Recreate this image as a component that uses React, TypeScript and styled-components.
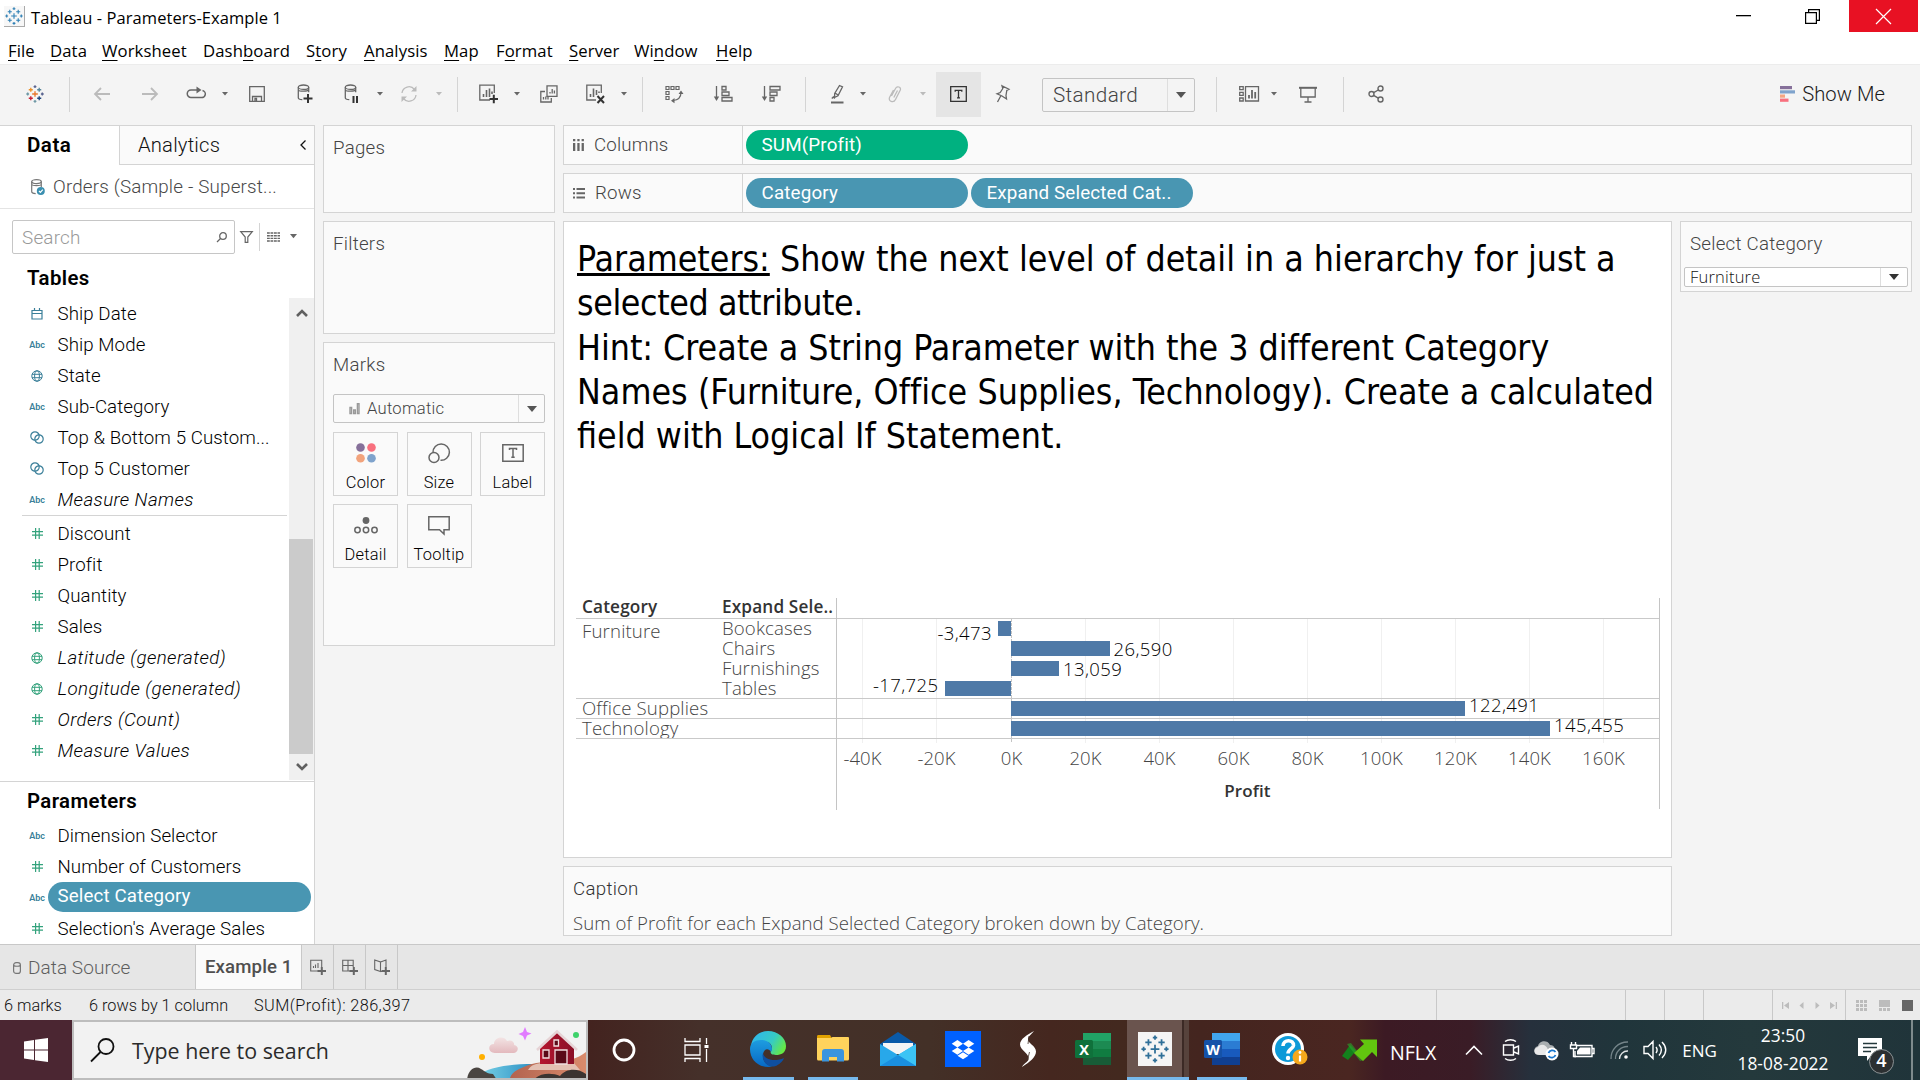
import React from 'react';
import styled, { createGlobalStyle, css } from 'styled-components';

const UI = 'Roboto, "Liberation Sans", sans-serif';
const SEGOE = '"Open Sans", "Noto Sans", sans-serif';
const TAHOMA = '"DejaVu Sans Condensed", "DejaVu Sans", sans-serif';
const LINE = '#d4d4d4';
const BLUE = '#4e79a7';
const PILL = '#4996b2';
const GREEN = '#00b180';

const Global = createGlobalStyle`
  *, *::before, *::after { box-sizing: border-box; }
  html, body { margin: 0; padding: 0; background: #f4f4f4; overflow: hidden; }
  svg { display: block; flex: none; overflow: visible; }
`;

const Screen = styled.div`
  width: 1920px;
  height: 1080px;
  display: flex;
  flex-direction: column;
  background: #f4f4f4;
  font-family: ${UI};
  font-size: 18.7px;
  font-weight: 350;
  letter-spacing: 0.06px;
  color: #111;
  white-space: nowrap;
  overflow: hidden;
`;

/* ---------- window chrome ---------- */

const TitleBar = styled.header`
  height: 32px;
  display: flex;
  align-items: center;
  background: #fff;
  padding: 0 2px 0 4px;
  font-family: ${SEGOE};
  font-weight: 400;
  font-size: 16.5px;
  color: #000;
`;
const AppIcon = styled.div`
  width: 21px;
  height: 21px;
  display: grid;
  place-items: center;
  background: #f7f7f7;
  border-right: 1px solid #aaa;
  border-bottom: 1px solid #aaa;
  margin-right: 6px;
`;
const WindowTitle = styled.span`
  flex: 1;
  padding-top: 2px;
`;
const WinButton = styled.div<{ $close?: boolean }>`
  width: 69px;
  height: 32px;
  display: grid;
  place-items: center;
  padding-right: ${p => (p.$close ? 0 : 4)}px;
  background: ${p => (p.$close ? '#e81123' : 'transparent')};
`;
const MenuBar = styled.nav`
  height: 32px;
  display: flex;
  align-items: center;
  background: #fff;
  padding: 4px 0 0 8px;
  font-family: ${SEGOE};
  font-weight: 400;
  font-size: 16.7px;
  letter-spacing: 0.1px;
  color: #000;
  u { text-underline-offset: 3px; text-decoration-thickness: 1px; }
`;
const MenuItem = styled.span<{ $w: number }>`
  width: ${p => p.$w}px;
`;

const ToolBar = styled.div`
  height: 61px;
  border-top: 1px solid #ececec;
  display: flex;
  align-items: center;
  padding-right: 35px;
  padding-bottom: 1px;
  color: #666;
`;
const Tool = styled.div<{ $ml: number; $w: number; $active?: boolean; $dim?: boolean }>`
  width: ${p => p.$w}px;
  height: 45px;
  padding-bottom: 1px;
  margin-left: ${p => p.$ml}px;
  flex: none;
  display: grid;
  place-items: center;
  background: ${p => (p.$active ? '#e5e5e5' : 'transparent')};
  color: ${p => (p.$dim ? '#bbb' : p.$active ? '#333' : '#666')};
`;
const ToolSep = styled.div<{ $ml: number }>`
  width: 1px;
  height: 35px;
  margin-left: ${p => p.$ml}px;
  background: ${LINE};
`;
const FitSelect = styled.div`
  width: 153px;
  height: 34px;
  margin: 1px 0 0 30px;
  display: flex;
  border: 1px solid #c4c4c4;
  border-radius: 2px;
  font-size: 20.7px;
  color: #444;
  align-items: center;
  padding-left: 10px;
  letter-spacing: 0.35px;
`;
const DropEnd = styled.div<{ $w: number }>`
  width: ${p => p.$w}px;
  align-self: stretch;
  margin-left: auto;
  border-left: 1px solid #dedede;
  display: grid;
  place-items: center;
`;
const ShowMe = styled.div`
  margin-left: auto;
  display: flex;
  align-items: center;
  gap: 7px;
  font-size: 20.2px;
  color: #1a1a1a;
  padding-bottom: 1px;
`;

/* ---------- workspace ---------- */

const Workspace = styled.main`
  height: 819px;
  display: flex;
  align-items: flex-start;
`;
const DataPane = styled.aside`
  width: 315px;
  height: 819px;
  background: #fff;
  border-right: 1px solid ${LINE};
  border-top: 1px solid ${LINE};
  display: flex;
  flex-direction: column;
`;
const PaneTabs = styled.div`
  height: 39px;
  display: flex;
  font-size: 20.2px;
`;
const DataTab = styled.div`
  width: 119px;
  padding-left: 27px;
  line-height: 38px;
  font-weight: 600;
  font-size: 20.6px;
  color: #000;
  letter-spacing: 0.45px;
`;
const AnalyticsTab = styled.div`
  flex: 1;
  display: flex;
  align-items: center;
  justify-content: space-between;
  padding: 0 8px 0 18px;
  background: #fafafa;
  border-left: 1px solid ${LINE};
  border-bottom: 1px solid ${LINE};
  letter-spacing: 0.2px;
`;
const SourceRow = styled.div`
  height: 44px;
  border-bottom: 1px solid #e4e4e4;
  display: flex;
  align-items: center;
  padding-left: 31px;
  gap: 8px;
  color: #484848;
  font-size: 18.8px;
  letter-spacing: 0.18px;
`;
const SearchRow = styled.div`
  display: flex;
  align-items: center;
  height: 45px;
  padding: 11px 0 0 12px;
  color: #666;
`;
const SearchBox = styled.div`
  width: 223px;
  height: 34px;
  border: 1px solid #c6c6c6;
  border-radius: 2px;
  display: flex;
  align-items: center;
  justify-content: space-between;
  padding: 0 7px 0 9px;
  color: #999;
  font-size: 18.9px;
  letter-spacing: 0.2px;
  margin-right: 5px;
  svg { color: #666; }
`;
const ThinSep = styled.div`
  width: 1px;
  height: 28px;
  background: ${LINE};
  margin: 0 7px 0 6px;
`;
const SectionTitle = styled.h2<{ $h: number; $drop?: number }>`
  margin: 0;
  height: ${p => p.$h}px;
  line-height: ${p => p.$h}px;
  padding: ${p => p.$drop ?? 0}px 0 0 27px;
  font-size: 20.4px;
  font-weight: 600;
  letter-spacing: 0.4px;
  color: #000;
`;
const ListArea = styled.div`
  height: 482px;
  display: flex;
`;
const FieldList = styled.div`
  width: 289px;
`;
const FieldRow = styled.div<{ $italic?: boolean }>`
  height: 31px;
  display: flex;
  align-items: center;
  color: #000;
  font-style: ${p => (p.$italic ? 'italic' : 'normal')};
  letter-spacing: ${p => (p.$italic ? 0.42 : 0.08)}px;
`;
const FieldIcon = styled.div<{ $measure?: boolean }>`
  width: 16px;
  flex: none;
  margin-left: 29px;
  display: grid;
  place-items: center;
  font-style: normal;
  color: ${p => (p.$measure ? '#33a27c' : '#3a7f99')};
`;
const Abc = styled.span`
  font-size: 9px;
  font-weight: 600;
  line-height: 12px;
  letter-spacing: -0.1px;
`;
const FieldName = styled.span<{ $selected?: boolean }>`
  margin-left: 3px;
  flex: 1;
  margin-right: 3px;
  height: 30px;
  line-height: 30px;
  padding-left: 9.5px;
  ${p => p.$selected && css`
    background: ${PILL};
    border-radius: 15px;
    color: #fff;
    font-weight: 400;
    letter-spacing: 0.15px;
    line-height: 29px;
    margin-bottom: 1px;
  `}
`;
const ListDivider = styled.div`
  height: 1px;
  background: ${LINE};
  margin: 0 2px 2px 22px;
`;
const ScrollBar = styled.div`
  width: 25px;
  background: #f0f0f0;
  display: flex;
  flex-direction: column;
  align-items: center;
  color: #606060;
`;
const ScrollArrow = styled.div<{ $h: number }>`
  height: ${p => p.$h}px;
  display: grid;
  place-items: center;
`;
const ScrollThumb = styled.div`
  width: 24px;
  height: 215px;
  margin-top: auto;
  align-self: flex-start;
  background: #cbcbcb;
`;
const ParamArea = styled.section`
  border-top: 1px solid ${LINE};
  margin-top: 1px;
  flex: 1;
`;

const CardColumn = styled.div`
  width: 232px;
  margin-left: 8px;
  display: flex;
  flex-direction: column;
  gap: 8px;
`;
const Card = styled.section<{ $h: number }>`
  height: ${p => p.$h}px;
  border: 1px solid ${LINE};
  background: #fafafa;
`;
const CardTitle = styled.div`
  height: 44px;
  line-height: 44px;
  padding-left: 9px;
  color: #444;
  letter-spacing: 0.25px;
`;
const MarkSelect = styled.div`
  width: 212px;
  height: 29px;
  margin: 7px 0 9px 9px;
  border: 1px solid #c4c4c4;
  border-radius: 2px;
  display: flex;
  align-items: center;
  padding-left: 15px;
  gap: 7px;
  color: #444;
  font-size: 16.6px;
  letter-spacing: 0.25px;
`;
const MarkGrid = styled.div`
  display: grid;
  grid-template-columns: repeat(3, 65px);
  grid-auto-rows: 64px;
  gap: 8px 8.5px;
  padding-left: 9px;
`;
const MarkButton = styled.div`
  border: 1px solid ${LINE};
  display: flex;
  flex-direction: column;
  align-items: center;
  font-size: 16.4px;
  letter-spacing: 0.25px;
  color: #000;
`;
const MarkGlyph = styled.div`
  height: 40px;
  display: grid;
  place-items: center;
  color: #666;
`;

const SheetArea = styled.div`
  width: 1349px;
  margin-left: 8px;
  display: flex;
  flex-direction: column;
  gap: 8px;
`;
const Shelf = styled.div`
  height: 40px;
  border: 1px solid ${LINE};
  background: #fafafa;
  display: flex;
  align-items: center;
  gap: 3px;
  color: #444;
`;
const ShelfName = styled.div`
  width: 179px;
  align-self: stretch;
  border-right: 1px solid ${LINE};
  display: flex;
  align-items: center;
  gap: 10px;
  padding-left: 9px;
  letter-spacing: 0.15px;
`;
const Pill = styled.div<{ $color: string }>`
  width: 222px;
  height: 30px;
  line-height: 31px;
  border-radius: 15px;
  padding-left: 15.5px;
  color: #fff;
  background: ${p => p.$color};
  font-size: 18.8px;
  font-weight: 400;
  letter-spacing: 0.16px;
`;
const SheetRow = styled.div`
  display: flex;
  gap: 8px;
  align-items: flex-start;
`;
const SheetColumn = styled.div`
  width: 1109px;
  display: flex;
  flex-direction: column;
  gap: 8px;
`;
const View = styled.section`
  height: 637px;
  background: #fff;
  border: 1px solid ${LINE};
  padding: 14.7px 12px 0;
  display: flex;
  flex-direction: column;
`;
const SheetTitle = styled.div`
  font-family: ${TAHOMA};
  font-weight: 400;
  font-size: 35.4px;
  line-height: 44px;
  height: 361px;
  padding-left: 1px;
  color: #000;
  u { text-decoration-thickness: 3px; text-underline-offset: 2px; }
`;
const Para = styled.p`
  margin: 0 0 1.5px;
`;
const TitleLine = styled.span<{ $ls: number }>`
  display: block;
  letter-spacing: ${p => p.$ls}px;
`;
const Viz = styled.div`
  height: 212px;
  display: flex;
  font-family: ${SEGOE};
`;
const RowHeads = styled.div`
  width: 261px;
  border-right: 1px solid #c4c4c4;
  font-size: 18.6px;
  font-weight: 300;
  color: #444;
`;
const HeadLine = styled.div<{ $h: number; $bold?: boolean }>`
  height: ${p => p.$h}px;
  border-bottom: 1px solid #c9c9c9;
  display: flex;
  overflow: hidden;
  line-height: 20px;
  ${p => p.$bold && css`
    font-weight: 600;
    font-size: 17.2px;
    color: #333;
  `}
`;
const Dim = styled.div<{ $first?: boolean; $top?: number }>`
  width: ${p => (p.$first ? 140 : 120)}px;
  padding-left: ${p => (p.$first ? 6 : 6)}px;
  margin-top: ${p => p.$top ?? -1}px;
  letter-spacing: 0.15px;
`;
const AxisText = styled.text<{ $dark?: boolean; $bold?: boolean }>`
  font-family: ${SEGOE};
  font-size: ${p => (p.$bold ? 17 : 18.5)}px;
  font-weight: ${p => (p.$bold ? 600 : 300)};
  letter-spacing: ${p => (p.$dark ? 0.4 : 0.1)}px;
  fill: ${p => (p.$bold ? '#333' : p.$dark ? '#000' : '#444')};
`;
const Caption = styled.section`
  height: 70px;
  border: 1px solid ${LINE};
  background: #fafafa;
  padding-left: 9px;
  overflow: hidden;
`;
const CaptionTitle = styled.div`
  height: 42px;
  line-height: 44px;
  color: #333;
  letter-spacing: 0.3px;
`;
const CaptionBody = styled.div`
  font-family: ${SEGOE};
  font-size: 18.6px;
  font-weight: 300;
  line-height: 28px;
  letter-spacing: 0.05px;
  color: #444;
`;
const ParamCard = styled.section`
  width: 232px;
  height: 71px;
  border: 1px solid ${LINE};
  background: #fafafa;
  color: #444;
`;
const ParamSelect = styled.div`
  width: 224px;
  height: 20px;
  margin: 1px 0 0 3px;
  display: flex;
  align-items: center;
  background: #fff;
  border: 1px solid #c4c4c4;
  border-radius: 2px;
  font-family: ${SEGOE};
  font-size: 16.5px;
  font-weight: 300;
  line-height: 20px;
  letter-spacing: 0.2px;
  color: #111;
  padding-left: 5px;
`;

/* ---------- sheet tabs and status ---------- */

const SheetTabs = styled.div`
  height: 45px;
  display: flex;
  background: #e6e6e6;
  border-top: 1px solid #c8c8c8;
`;
const SourceTab = styled.div`
  width: 196px;
  border-right: 1px solid #c8c8c8;
  display: flex;
  align-items: center;
  gap: 7px;
  padding: 1px 0 0 13px;
  color: #5e5e5e;
  font-size: 19px;
`;
const ActiveTab = styled.div`
  width: 106px;
  background: #fafafa;
  border-right: 1px solid #c8c8c8;
  line-height: 44px;
  padding-left: 9px;
  font-weight: 500;
  font-size: 18.6px;
  letter-spacing: 0.12px;
  color: #4f4f4f;
`;
const NewTab = styled.div`
  width: 32px;
  border-right: 1px solid #c8c8c8;
  display: grid;
  place-items: center;
  color: #666;
`;
const StatusBar = styled.div`
  height: 31px;
  display: flex;
  background: #ebebeb;
  border-top: 1px solid #cfcfcf;
  font-size: 16.3px;
  line-height: 31px;
  color: #111;
`;
const StatusText = styled.span<{ $w: number; $ls?: number }>`
  width: ${p => p.$w}px;
  letter-spacing: ${p => p.$ls ?? 0}px;
`;
const StatusCell = styled.div<{ $w: number; $pad?: number; $gap?: number; $auto?: boolean }>`
  width: ${p => p.$w}px;
  margin-left: ${p => (p.$auto ? 'auto' : 0)};
  border-left: 1px solid #c8c8c8;
  display: flex;
  align-items: center;
  gap: ${p => p.$gap ?? 0}px;
  padding-left: ${p => p.$pad ?? 0}px;
  color: #bcbcbc;
`;

/* ---------- taskbar ---------- */

const TaskBar = styled.footer`
  height: 60px;
  display: flex;
  font-family: ${SEGOE};
  font-weight: 400;
  letter-spacing: 0;
  color: #fff;
  background: linear-gradient(90deg, #4b2632 0, #4b2632 72px, #43231f 590px, #45302a 700px, #433027 930px, #45271f 1050px, #43291f 1120px, #44251f 1200px, #4a2621 1350px, #3c1a24 1385px, #3a1c26 1470px, #26303c 1530px, #20353b 1620px, #24393c 1750px, #20343a 1920px);
`;
const TaskCell = styled.div<{ $w: number; $shift?: number }>`
  width: ${p => p.$w}px;
  height: 60px;
  flex: none;
  display: grid;
  place-items: center;
  padding-left: ${p => p.$shift ?? 0}px;
`;
const TaskApp = styled(TaskCell)<{ $line?: number; $active?: boolean }>`
  grid-template-rows: 57px 3px;
  justify-items: center;
  ${p => p.$active && css`
    background: linear-gradient(90deg, transparent 5px, #6a544e 5px, #6a544e 60px, #3c2a25 60px, #3c2a25 62px, #57433c 62px);
  `}
  &::after {
    content: '';
    width: ${p => p.$line ?? 0}px;
    height: 3px;
    margin-left: ${p => (p.$active ? 5 : 0)}px;
    background: #76b9ed;
  }
`;
const ActiveGlyph = styled.div`
  padding-right: 1px;
`;
const TaskSearch = styled.div`
  width: 516px;
  height: 60px;
  background: #f2f2f2;
  border: 2px solid #bdbdbd;
  display: flex;
  align-items: center;
  padding-left: 16px;
  font-size: 21.4px;
  color: #2b2b2b;
  overflow: hidden;
`;
const SearchHint = styled.span`
  margin-left: 17px;
  padding-top: 1px;
  flex: 1;
`;
const Ticker = styled.div`
  width: 137px;
  display: flex;
  align-items: center;
  gap: 13px;
  padding: 0 0 0 21px;
  font-size: 19.6px;
`;
const TickerName = styled.span`
  padding-top: 4px;
`;
const Lang = styled(TaskCell)`
  font-size: 17px;
`;
const Clock = styled.div`
  width: 114px;
  display: flex;
  flex-direction: column;
  align-items: center;
  font-size: 17.3px;
  line-height: 28px;
  padding-top: 2px;
  letter-spacing: 0.1px;
`;
const Notice = styled.div`
  width: 73px;
  border-right: 2px solid #7f8a8d;
  padding: 18px 0 0 18px;
  position: relative;
`;
const Badge = styled.span`
  position: absolute;
  left: 29px;
  top: 29px;
  width: 25px;
  height: 25px;
  line-height: 21px;
  border-radius: 50%;
  border: 1.5px solid #8b9294;
  background: #2b2f31;
  text-align: center;
  font-size: 18px;
  font-weight: 600;
`;

/* ---------- icons ---------- */

type P = { children?: React.ReactNode; w?: number; h?: number; sw?: number; vb?: string };
const Ico = ({ children, w = 16, h = 18, sw = 1.3, vb }: P) => (
  <svg width={w} height={h} viewBox={vb ?? `0 0 ${w} ${h}`} fill="none" stroke="currentColor" strokeWidth={sw}>{children}</svg>
);
const Caret = ({ s = 6, c = 'currentColor' }: { s?: number; c?: string }) => (
  <svg width={s} height={s * 0.6} viewBox="0 0 10 6"><path d="M0 0h10L5 6z" fill={c} /></svg>
);
const CROSSES: [number, number, number, string][] = [
  [16, 16, 5, '#e8762b'], [8.5, 8.5, 3.6, '#eb912b'], [23.5, 8.5, 3.6, '#59879b'], [8.5, 23.5, 3.6, '#c72035'], [23.5, 23.5, 3.6, '#1f457d'],
  [16, 3, 2.5, '#5b6591'], [16, 29, 2.5, '#7099a6'], [3, 16, 2.5, '#7099a6'], [29, 16, 2.5, '#5b6591'],
];
const TableauMark = ({ size, mono, sw = 2 }: { size: number; mono?: string; sw?: number }) => (
  <svg width={size} height={size} viewBox="0 0 32 32" fill="none" strokeWidth={sw}>
    {CROSSES.map(([x, y, r, c], i) => <path key={i} stroke={mono ?? c} d={`M${x - r} ${y}h${2 * r}M${x} ${y - r}v${2 * r}`} />)}
  </svg>
);
const CalendarIcon = () => <Ico w={12} h={12} sw={1.2}><path d="M1 2.5h10v8.5H1zM1 5.5h10M3.5 0v3M8.500 0v3" /></Ico>;
const GlobeIcon = () => <Ico w={12} h={12} sw={1}><circle cx="6" cy="6" r="5.2" /><ellipse cx="6" cy="6" rx="2.4" ry="5.2" /><path d="M1 4.3h10M1 7.7h10" /></Ico>;
const SetIcon = () => <Ico w={14} h={13} sw={1.2}><circle cx="5" cy="5" r="4.2" /><circle cx="9" cy="8" r="4.2" /></Ico>;
const HashIcon = () => <Ico w={11} h={11} sw={1.2}><path d="M3.600 0v11M7.200 0v11M0 3.600h11M0 7.200h11" /></Ico>;

type Kind = 'date' | 'abc' | 'geo' | 'set' | 'num';
const KindIcon = ({ kind }: { kind: Kind }) => {
  if (kind === 'abc') return <Abc>Abc</Abc>;
  if (kind === 'date') return <CalendarIcon />;
  if (kind === 'geo') return <GlobeIcon />;
  if (kind === 'set') return <SetIcon />;
  return <HashIcon />;
};
type FieldDef = { kind: Kind; name: string; italic?: boolean; measure?: boolean; selected?: boolean };
const Field = ({ kind, name, italic, measure, selected }: FieldDef) => (
  <FieldRow $italic={italic}>
    <FieldIcon $measure={measure}><KindIcon kind={kind} /></FieldIcon>
    <FieldName $selected={selected}>{name}</FieldName>
  </FieldRow>
);

const DIMENSIONS: FieldDef[] = [
  { kind: 'date', name: 'Ship Date' },
  { kind: 'abc', name: 'Ship Mode' },
  { kind: 'geo', name: 'State' },
  { kind: 'abc', name: 'Sub-Category' },
  { kind: 'set', name: 'Top & Bottom 5 Custom...' },
  { kind: 'set', name: 'Top 5 Customer' },
  { kind: 'abc', name: 'Measure Names', italic: true },
];
const MEASURES: FieldDef[] = [
  { kind: 'num', name: 'Discount', measure: true },
  { kind: 'num', name: 'Profit', measure: true },
  { kind: 'num', name: 'Quantity', measure: true },
  { kind: 'num', name: 'Sales', measure: true },
  { kind: 'geo', name: 'Latitude (generated)', measure: true, italic: true },
  { kind: 'geo', name: 'Longitude (generated)', measure: true, italic: true },
  { kind: 'num', name: 'Orders (Count)', measure: true, italic: true },
  { kind: 'num', name: 'Measure Values', measure: true, italic: true },
];
const PARAMETERS: FieldDef[] = [
  { kind: 'abc', name: 'Dimension Selector' },
  { kind: 'num', name: 'Number of Customers', measure: true },
  { kind: 'abc', name: 'Select Category', selected: true },
  { kind: 'num', name: "Selection's Average Sales", measure: true },
];

/* ---------- chart ---------- */

const ZERO = 174.5;
const PER_K = 3.706;
const BARS = [
  { value: -3.473, label: '-3,473', x: 155, y: 42 },
  { value: 26.59, label: '26,590', x: 276.5, y: 58 },
  { value: 13.059, label: '13,059', x: 226, y: 78 },
  { value: -17.725, label: '-17,725', x: 101.5, y: 94 },
  { value: 122.491, label: '122,491', x: 632, y: 114 },
  { value: 145.455, label: '145,455', x: 717, y: 134 },
];
const TICKS = [-40, -20, 0, 20, 40, 60, 80, 100, 120, 140, 160];

const Plot = () => (
  <svg width={823} height={212} viewBox="0 0 823 212" shapeRendering="crispEdges">
    {TICKS.map(t => {
      const x = Math.round(ZERO + t * PER_K) - 0.5;
      return (
        <g key={t}>
          <path d={`M${x} 21V145`} stroke={t ? '#f0f0f0' : '#c4c4c4'} strokeDasharray={t ? undefined : '3 1'} />
          <AxisText x={x} y={167} textAnchor="middle">{`${t}K`}</AxisText>
        </g>
      );
    })}
    {[20.5, 100.5, 120.5, 140.5].map(y => <path key={y} d={`M0 ${y}H823`} stroke="#c9c9c9" />)}
    {BARS.map((b, i) => (
      <rect key={b.label} x={Math.min(ZERO, ZERO + b.value * PER_K) - 0.5} y={23 + i * 20} width={Math.abs(b.value) * PER_K} height={15} fill={BLUE} />
    ))}
    {BARS.map(b => <AxisText key={b.label} $dark x={b.x} y={b.y} textAnchor={b.value < 0 ? 'end' : 'start'}>{b.label}</AxisText>)}
    <AxisText $bold x={410.5} y={198.5} textAnchor="middle">Profit</AxisText>
    <path d="M822.5 0V211" stroke="#c4c4c4" />
  </svg>
);

/* ---------- toolbar glyphs ---------- */

const DbShape = () => <><ellipse cx="6.5" cy="3.2" rx="5.2" ry="2.2" /><path d="M1.3 3.2v10.5c0 1 1.5 1.8 4 2M11.7 3.2v5M1.3 6c1 1.6 9 1.6 10.4 0" /></>;

const TopTools = () => (
  <ToolBar>
    <Tool $ml={26} $w={18}><TableauMark size={18} sw={2.4} /></Tool>
    <ToolSep $ml={25} />
    <Tool $ml={24} $w={16} $dim><Ico sw={1.8} h={14}><path d="M16 7H1M7 1L1 7l6 6" /></Ico></Tool>
    <Tool $ml={32} $w={16} $dim><Ico sw={1.8} h={14}><path d="M0 7h15M9 1l6 6-6 6" /></Ico></Tool>
    <Tool $ml={29} $w={18}><Ico w={18} h={18} sw={1.5}><path d="M10 5H4a3.300 3.300 0 000 7.500h10a3.300 3.300 0 001.500-7" /><path d="M9.500 1.500l5 3.500-5 3.500z" fill="currentColor" stroke="none" /></Ico></Tool>
    <Tool $ml={17} $w={6}><Caret /></Tool>
    <Tool $ml={21} $w={16}><Ico h={16}><path d="M.7.7h14.600v14.600H.7zM3.500 15v-4.500h9V15M6 15v-2.500h1.500V15" /></Ico></Tool>
    <Tool $ml={32} $w={16}><Ico h={20}><DbShape /><path d="M6.500 14.500h9M11 10v9" stroke="#333" strokeWidth="2" /></Ico></Tool>
    <Tool $ml={31} $w={16}><Ico h={20}><DbShape /><path d="M9.500 12v7M13 12v7" stroke="#333" strokeWidth="2" /></Ico></Tool>
    <Tool $ml={17} $w={6}><Caret /></Tool>
    <Tool $ml={17} $w={18} $dim><Ico w={18} h={18}><path d="M2 8a7 7 0 0112.500-3.500M16 10a7 7 0 01-12.500 3.500" /><path d="M16.500 1v5.500H11zM1.500 17v-5.500H7z" fill="currentColor" stroke="none" /></Ico></Tool>
    <Tool $ml={18} $w={6} $dim><Caret /></Tool>
    <ToolSep $ml={15} />
    <Tool $ml={21} $w={20}><Ico w={20} h={20}><path d="M11 16H.8V1.200h14.500V9" /><path d="M4.500 13v-3M7.500 13V6M10.500 13V4.500M13 10V7.500" strokeWidth="1.600" /><path d="M10.500 15h8.500M14.800 10.800v8.500" stroke="#333" strokeWidth="2" /></Ico></Tool>
    <Tool $ml={15} $w={6}><Caret /></Tool>
    <Tool $ml={20} $w={18}><Ico w={18} h={18}><path d="M7 .8h10v10.500H7zM5 6.500H.8v10.500h10.500v-4M10 8.500V7M12.200 8.500V4M14.400 8.500V5.500M3.500 14.500V12M5.800 14.500V11.500M8 14.500V12" /></Ico></Tool>
    <Tool $ml={28} $w={20}><Ico w={20} h={20}><path d="M10 16H.8V1.200h14.500V9" /><path d="M4.500 13v-3M7.500 13V4.500M10.500 11V6M13 9V7.500" strokeWidth="1.600" /><path d="M11.500 12l6.500 7M18 12l-6.500 7" stroke="#333" strokeWidth="2" /></Ico></Tool>
    <Tool $ml={15} $w={6}><Caret /></Tool>
    <ToolSep $ml={15} />
    <Tool $ml={22} $w={18}><Ico w={18} h={18} sw={1.200}><path d="M1 1.500h3v3H1zM6 1.500h3v3H6zM11 1.500h3v3h-3zM1 6.500h3v3H1zM1 11.500h3v3H1zM16 7.500c0 5-3 7.500-8 8" /><path d="M13.500 9L16 5.500 18.500 9zM9.500 13L6 15.700l3.500 2.600z" fill="currentColor" stroke="none" /></Ico></Tool>
    <Tool $ml={30} $w={20}><Ico w={20} h={18}><path d="M3.500 1v13" /><path d="M.8 11.500h5.400L3.500 16z" fill="currentColor" stroke="none" /><path d="M9 1.500h4v3.500H9zM9 7h7v3.500H9zM9 12.500h10V16H9z" /></Ico></Tool>
    <Tool $ml={28} $w={20}><Ico w={20} h={18}><path d="M3.500 1v13" /><path d="M.8 11.500h5.400L3.500 16z" fill="currentColor" stroke="none" /><path d="M9 1.500h10v3.500H9zM9 7h7v3.500H9zM9 12.500h4V16H9z" /></Ico></Tool>
    <ToolSep $ml={24} />
    <Tool $ml={25} $w={14}><Ico w={14} h={20}><path d="M8.500 1.500l3 1.300-4.500 9L3.500 13.500l.2-4zM4 9l3 2M.8 14.500l1.500-1.500 1.500 1.500" /><path d="M0 18.500h12.500" strokeWidth="2" /></Ico></Tool>
    <Tool $ml={15} $w={6}><Caret /></Tool>
    <Tool $ml={22} $w={14} $dim><Ico w={14} h={18}><path d="M3.500 11L7.500 3.500c1.500-3 6-1.500 4.800 1.500L7.500 14.500c-2 4-7.500 1.800-6-2L5.500 5M5.800 12.500L9.500 5.500" /></Ico></Tool>
    <Tool $ml={18} $w={6} $dim><Caret /></Tool>
    <Tool $ml={10} $w={45} $active><Ico w={17} h={16}><path d="M.7.7h15.600v14.600H.7z" /><path d="M5.200 5.800V4.300h6.600v1.500M8.500 4.300v7.400M7 11.900h3" /></Ico></Tool>
    <Tool $ml={15} $w={14}><Ico w={14} h={18}><path d="M6 .8l7 3.400-2.200 1.300-.8 5 .5 3.500L6 11 1 8.800l3.200-1.300 2.600-4zM5 10.500L1.500 17" /></Ico></Tool>
    <Tool $ml={0} $w={2} />
    <FitSelect>Standard<DropEnd $w={27}><Caret s={10} c="#555" /></DropEnd></FitSelect>
    <ToolSep $ml={21} />
    <Tool $ml={22} $w={20}><Ico w={20} h={16}><path d="M.7.7h3.500v3H.7zM.7 6.300h3.500v3H.7zM.7 12h3.500v3H.7zM6.500.7h13v14.300h-13z" /><path d="M10 12.500V9M13 12.500V4M16.200 12.500V6" strokeWidth="1.800" /></Ico></Tool>
    <Tool $ml={12} $w={6}><Caret /></Tool>
    <Tool $ml={22} $w={18}><Ico w={18} h={17}><path d="M0 1.800h18" strokeWidth="2" /><path d="M1.800 2v9h14.400V2M9 11v5M5.500 16h7" /></Ico></Tool>
    <ToolSep $ml={26} />
    <Tool $ml={24} $w={16}><Ico w={16} h={18} sw={1.400}><circle cx="12.500" cy="3.500" r="2.500" /><circle cx="3.500" cy="9" r="2.500" /><circle cx="12.500" cy="14.500" r="2.500" /><path d="M5.600 7.600L10.300 5M5.600 10.400l4.700 2.700" /></Ico></Tool>
    <ShowMe>
      <svg width="15" height="16"><path d="M0 0h12v3.200H0z" fill="#86709a" /><path d="M0 4.300h15v3.200H0z" fill="#7fa3cc" /><path d="M0 8.500h5v3.200H0z" fill="#f4a582" /><path d="M0 12.600h8.500v3.200H0z" fill="#f8707e" /></svg>
      Show Me
    </ShowMe>
  </ToolBar>
);

/* ---------- taskbar art ---------- */

const Farm = () => (
  <svg width="122" height="56" viewBox="0 0 122 56">
    <defs>
      <linearGradient id="sea" x1="0" x2="1"><stop offset="0" stopColor="#7ed6e8" /><stop offset="1" stopColor="#2b8fc4" /></linearGradient>
      <linearGradient id="hill" x1="0" x2="1"><stop offset="0" stopColor="#b2634f" /><stop offset="1" stopColor="#d98b6c" /></linearGradient>
      <linearGradient id="cloud" x1="0" y1="0" x2="0" y2="1"><stop offset="0" stopColor="#f3e4e4" /><stop offset="1" stopColor="#e3b9bd" /></linearGradient>
      <linearGradient id="barn" x1="0" x2="1"><stop offset="0" stopColor="#b5162f" /><stop offset="1" stopColor="#8a0f26" /></linearGradient>
    </defs>
    <path d="M12 56c6-9 26-14 58-14v14z" fill="url(#sea)" />
    <path d="M46 56c3-8 10-9 16-12 12-6 32-3 44-6 7-2 12-5 16-8v26z" fill="url(#hill)" />
    <path d="M64 48c3-5 8-7 16-7h30l6 7z" fill="#e3c0b2" />
    <path d="M3 58c1-10 8-15 14-11 4 2 6 5 12 5l4 6z" fill="#4a4541" />
    <path d="M70 58c4-7 18-8 26-4 6-8 18-8 26-2v6z" fill="#3b3431" />
    <path d="M76 42V25l17-16 17 16v17z" fill="url(#barn)" />
    <path d="M73 28L93 9.500 113 28" fill="none" stroke="#e6d4d6" strokeWidth="2.600" />
    <path d="M91 42V28h12v14z" fill="#5b0a18" stroke="#f1dfe0" strokeWidth="1.300" />
    <path d="M79 28h6v8h-6zM90 18h4.500v6H90z" fill="#5b0a18" stroke="#f1dfe0" strokeWidth="1.300" />
    <path d="M31 31c-7 0-8-9-1-9 0-7 10-9 13-3 5-2 8 2 7 4 6 1 4 8 0 8z" fill="url(#cloud)" />
    <path d="M61 5l2 5 4.500 1.500L63 13.500l-2 5-2-4.500-4.500-2L59 10z" fill="#e17bff" />
    <circle cx="18" cy="35" r="3" fill="#ffb000" />
    <circle cx="112" cy="13" r="3" fill="#3ed26b" />
  </svg>
);
const Edge = () => (
  <svg width="36" height="36" viewBox="0 0 36 36">
    <defs>
      <linearGradient id="eg" x1="0" x2="1" y1=".2" y2=".6"><stop offset="0" stopColor="#2fb6ee" /><stop offset=".6" stopColor="#36cbc4" /><stop offset="1" stopColor="#66ea44" /></linearGradient>
      <linearGradient id="eb" x1="0" x2="0" y1="0" y2="1"><stop offset="0" stopColor="#1e9de0" /><stop offset="1" stopColor="#0768c4" /></linearGradient>
    </defs>
    <path d="M1 15C2 6 9 0 18 0c10 0 18 7 18 15 0 7-5 9-10 9-5 0-6-2-5-4 2-3 1-8-4-9C9 9 3 12 1 15z" fill="url(#eg)" />
    <path d="M0 18C0 12 5 9 11 9c7 0 11 4 11 9 0 2-1 2-1 3-2-4-7-4-8 2-1 7 4 12 10 12.500C10 38 0 30 0 18z" fill="url(#eb)" />
    <path d="M13 22c-2 8 5 15 12 13.300 4-1.500 8-5 9-8.300-9 4-20 2-21-5z" fill="#0f4fa0" />
  </svg>
);
const Office = ({ letter, tones }: { letter: string; tones: string[] }) => (
  <svg width="36" height="34" viewBox="0 0 36 34">
    {tones.slice(0, 4).map((c, i) => <rect key={c} x="8" y={1 + i * 8} width="28" height="8" fill={c} />)}
    <rect x="0" y="8" width="18" height="18" rx="1.500" fill={tones[4]} />
    <text x="9" y="22.500" textAnchor="middle" fontFamily="Open Sans, sans-serif" fontWeight="700" fontSize="14.500" fill="#fff">{letter}</text>
  </svg>
);
const Taskbar = () => (
  <TaskBar>
    <TaskCell $w={72}><svg width="24" height="24" viewBox="0 0 24 24"><path d="M0 3.400l10-1.400v9.500H0zM11 1.800L24 0v11.500H11zM0 12.500h10V22L0 20.600zM11 12.500h13V24l-13-1.800z" fill="#fff" /></svg></TaskCell>
    <TaskSearch>
      <svg width="25" height="24" viewBox="0 0 25 24" fill="none" stroke="#111" strokeWidth="1.800"><circle cx="16" cy="8.500" r="7.500" /><path d="M10.500 14L1 23.500" /></svg>
      <SearchHint>Type here to search</SearchHint>
      <Farm />
    </TaskSearch>
    <TaskCell $w={72}><svg width="24" height="24"><circle cx="12" cy="12" r="10" fill="none" stroke="#fff" strokeWidth="2.800" /></svg></TaskCell>
    <TaskCell $w={72}><svg width="24" height="24" fill="none" stroke="#fff" strokeWidth="1.300"><path d="M1 0v3.500h15V0M1 7h15v10H1zM1 24v-3.500h15V24M22.500 0v6M22.500 11v13" /><path d="M20.500 7h4v3h-4z" fill="#fff" stroke="none" /></svg></TaskCell>
    <TaskApp $w={72} $line={51}><Edge /></TaskApp>
    <TaskApp $w={58} $line={50}>
      <svg width="32" height="28" viewBox="0 0 32 28"><path d="M0 1.500C0 .5.500 0 1.500 0H13l2 3.500H0z" fill="#e0a100" /><path d="M0 3h14l1.500-1H31q1 0 1 1v21q0 1.500-1.500 1.500h-29Q0 25.500 0 24z" fill="#ffd35c" /><path d="M5 26.500V17q0-3 3-3h16q3 0 3 3v9.500h-7V22h-8v4.500z" fill="#3b95dd" /></svg>
    </TaskApp>
    <TaskApp $w={72}>
      <svg width="36" height="34" viewBox="0 0 36 34"><path d="M0 12L18 0l18 12v4H0z" fill="#0a5aa8" /><path d="M3 11h30v11H3z" fill="#f5f5f5" /><path d="M0 12l18 11 18-11v22H0z" fill="#28a8ea" /><path d="M18 23L36 12v22z" fill="#3cc4f5" /><path d="M0 34l18-11 18 11z" fill="#1a8fdf" /></svg>
    </TaskApp>
    <TaskApp $w={58}>
      <svg width="36" height="36" viewBox="0 0 36 36"><path d="M0 0h36v36H0z" fill="#0061ff" /><path d="M12.400 9l5.600 3.700-5.600 3.700-5.700-3.700zM23.600 9l5.700 3.700-5.700 3.700-5.600-3.700zM12.400 16.400l5.600 3.700-5.600 3.700-5.700-3.700zM23.600 16.400l5.700 3.700-5.700 3.700-5.600-3.700zM18 21.300l5.500 3.500-5.500 3.500-5.500-3.500z" fill="#fff" /></svg>
    </TaskApp>
    <TaskApp $w={72}>
      <svg width="18" height="36" viewBox="0 0 18 36"><path d="M15 0C8 4 1 8 1 13.500c0 6 10 9 8.500 15C9 31 4 33 3 36c8-5 14-10 14-15.500 0-6-8.500-8-8-12.500C9.300 5 13 3 15 0z" fill="#fff" /><path d="M9 13l1-8M8.500 29l2-8" stroke="#433027" strokeWidth=".8" /></svg>
    </TaskApp>
    <TaskApp $w={58}><Office letter="X" tones={['#21a366', '#1c8a52', '#107c41', '#185c37', '#0f713b']} /></TaskApp>
    <TaskApp $w={67} $active $line={62}>
      <ActiveGlyph><svg width="34" height="34" viewBox="0 0 34 34"><path d="M0 0h34v34H0z" fill="#f5f5f5" /><svg x="3" y="3"><TableauMark size={28} mono="#2f6f98" sw={2} /></svg></svg></ActiveGlyph>
    </TaskApp>
    <TaskApp $w={66} $line={50}><Office letter="W" tones={['#41a5ee', '#2b7cd3', '#185abd', '#103f91', '#1552a8']} /></TaskApp>
    <TaskCell $w={66} $shift={4}>
      <svg width="36" height="34" viewBox="0 0 36 34"><circle cx="16" cy="16" r="16" fill="#fff" /><circle cx="16" cy="16" r="13" fill="#0d9ad8" /><path d="M11 13c0-7 11-7 10.500-.5C21 16 16 16 16 20.500" fill="none" stroke="#fff" strokeWidth="3.600" /><circle cx="16" cy="25" r="2.200" fill="#fff" /><circle cx="28" cy="24" r="7.500" fill="#f5a81c" /><path d="M28 22.500v6" stroke="#fff" strokeWidth="2.200" /><circle cx="28" cy="19.500" r="1.400" fill="#fff" /></svg>
    </TaskCell>
    <Ticker>
      <svg width="35" height="22" viewBox="0 0 35 22"><path d="M0 17L8 6l6 6-8 9z" fill="#13811c" /><path d="M5 5l4-1 13 17-4 1z" fill="#2ba52c" opacity=".6" /><path d="M12 14L22 5l-4-4.500h17V18l-5-5-9 9z" fill="#62c60f" /></svg>
      <TickerName>NFLX</TickerName>
    </Ticker>
    <TaskCell $w={32}><Ico w={18} h={10} sw={1.600}><path d="M1 9.500l8-8 8 8" /></Ico></TaskCell>
    <TaskCell $w={41}><Ico w={18} h={22} sw={1.400}><path d="M1.500 6h10v10h-10zM12 9l4.500-2v8L12 13M3 2.500c3-2.300 8-2.300 11 0M3 19.500c3 2.300 8 2.300 11 0" /></Ico></TaskCell>
    <TaskCell $w={30}><svg width="25" height="20"><path d="M5 14c-6 0-6-7-1-8 1-5 9-7 12-1 5 0 6 5 4 9z" fill="#a9aeb0" /><path d="M4 7c3-4 9-2 10 3l1 5H5c-6 0-6-7-1-8z" fill="#e8e8e8" /><circle cx="18" cy="14" r="6.500" fill="#fff" /><path d="M14.500 13a4 4 0 017-1M21.500 15a4 4 0 01-7 1" fill="none" stroke="#1a78d0" strokeWidth="1.800" /></svg></TaskCell>
    <TaskCell $w={42}><Ico w={24} h={18} sw={1.400}><path d="M7 4.500h15v11H5V10M22.500 7.500h1.500v5h-1.500" /><path d="M10 6.500h10.500v7H7V10z" fill="#fff" stroke="none" /><path d="M1.500 1v2.500M5.500 1v2.500M.5 4h6v3.500H.5zM3.500 8v7.500H6" /></Ico></TaskCell>
    <TaskCell $w={32}><svg width="18" height="18" fill="none" stroke="#75858a" strokeWidth="1.300"><path d="M1 18A16.500 16.500 0 0118 1M5.500 18A12 12 0 0118 5.500" /><path d="M9.500 18A8 8 0 0118 10" stroke="#dfe3e4" /><circle cx="16" cy="16" r="1.800" fill="#fff" stroke="none" /></svg></TaskCell>
    <TaskCell $w={38}><Ico w={23} h={20} sw={1.400}><path d="M1 6.500h4l5-5v17l-5-5H1zM13 7c1.500 2 1.500 4 0 6M16 4.500c3 3.500 3 7.500 0 11M19 2c5 5 5 11 0 16" /></Ico></TaskCell>
    <Lang $w={53}>ENG</Lang>
    <Clock><span>23:50</span><span>18-08-2022</span></Clock>
    <Notice>
      <svg width="24" height="24"><path d="M0 0h24v18H13l-4 5v-5H0z" fill="#fff" /><path d="M5 5.500h14M5 9.500h14M5 13.500h8" stroke="#24393c" strokeWidth="1.400" /></svg>
      <Badge>4</Badge>
    </Notice>
  </TaskBar>
);

export default function App() {
  return (
    <Screen>
      <Global />
      <TitleBar>
        <AppIcon><TableauMark size={18} mono="#2f80b5" sw={2} /></AppIcon>
        <WindowTitle>Tableau - Parameters-Example 1</WindowTitle>
        <WinButton><svg width="15" height="2"><path d="M0 0h15v1.300H0z" fill="#000" /></svg></WinButton>
        <WinButton><svg width="15" height="15" fill="none" stroke="#000" strokeWidth="1.200"><path d="M.6 3.600h10.800v10.800H.6zM3.600 3.600V.6h10.800v10.800h-3" /></svg></WinButton>
        <WinButton $close><svg width="15" height="15" stroke="#fff" strokeWidth="1.200"><path d="M0 0l15 15M15 0L0 15" /></svg></WinButton>
      </TitleBar>
      <MenuBar>
        <MenuItem $w={42}><u>F</u>ile</MenuItem>
        <MenuItem $w={52}><u>D</u>ata</MenuItem>
        <MenuItem $w={101}><u>W</u>orksheet</MenuItem>
        <MenuItem $w={103}>Dash<u>b</u>oard</MenuItem>
        <MenuItem $w={58}>S<u>t</u>ory</MenuItem>
        <MenuItem $w={80}><u>A</u>nalysis</MenuItem>
        <MenuItem $w={52}><u>M</u>ap</MenuItem>
        <MenuItem $w={73}>F<u>o</u>rmat</MenuItem>
        <MenuItem $w={65}><u>S</u>erver</MenuItem>
        <MenuItem $w={82}>Wi<u>n</u>dow</MenuItem>
        <MenuItem $w={60}><u>H</u>elp</MenuItem>
      </MenuBar>
      <TopTools />
      <Workspace>
        <DataPane>
          <PaneTabs>
            <DataTab>Data</DataTab>
            <AnalyticsTab>Analytics<Ico w={6} h={10} sw={1.300}><path d="M5.500.5L1 5l4.500 4.500" /></Ico></AnalyticsTab>
          </PaneTabs>
          <SourceRow>
            <svg width="14" height="16" fill="none" stroke="#777" strokeWidth="1.200"><ellipse cx="5.500" cy="2.600" rx="4.800" ry="2" /><path d="M.7 2.600v10c0 1 1.500 2 4 2M10.300 2.600V8M.7 5.500c1 1.500 8.600 1.500 9.600 0" /><circle cx="9.800" cy="12" r="4" fill="#3a8fb0" stroke="none" /><path d="M8 12l1.400 1.400 2.400-2.800" stroke="#fff" /></svg>
            Orders (Sample - Superst...
          </SourceRow>
          <SearchRow>
            <SearchBox>Search<Ico w={10} h={10}><circle cx="6" cy="4" r="3.300" /><path d="M3.500 6.500L0 10" /></Ico></SearchBox>
            <Ico w={13} h={12} sw={1.200}><path d="M.7.6h11.600L7.800 6v5.400H5.200V6z" /></Ico>
            <ThinSep />
            <Ico w={13} h={10} sw={1.400}><path d="M0 1h13M0 3.700h13M0 6.400h13M0 9h13" strokeDasharray="2.800 0.700" /></Ico>
            <Tool $ml={10} $w={7}><Caret s={7} /></Tool>
          </SearchRow>
          <SectionTitle $h={44} $drop={2}>Tables</SectionTitle>
          <ListArea>
            <FieldList>
              {DIMENSIONS.map(f => <Field key={f.name} {...f} />)}
              <ListDivider />
              {MEASURES.map(f => <Field key={f.name} {...f} />)}
            </FieldList>
            <ScrollBar>
              <ScrollArrow $h={29}><Ico w={12} h={8} sw={2.600}><path d="M1 7l5-5 5 5" /></Ico></ScrollArrow>
              <ScrollThumb />
              <ScrollArrow $h={26}><Ico w={12} h={8} sw={2.600}><path d="M1 1l5 5 5-5" /></Ico></ScrollArrow>
            </ScrollBar>
          </ListArea>
          <ParamArea>
            <SectionTitle $h={38}>Parameters</SectionTitle>
            {PARAMETERS.map(f => <Field key={f.name} {...f} />)}
          </ParamArea>
        </DataPane>

        <CardColumn>
          <Card $h={88}><CardTitle>Pages</CardTitle></Card>
          <Card $h={113}><CardTitle>Filters</CardTitle></Card>
          <Card $h={304}>
            <CardTitle>Marks</CardTitle>
            <MarkSelect>
              <svg width="11" height="11" fill="none" stroke="#999" strokeWidth="1.400"><path d="M1 4.500h1.600v6H1zM4.700 7h1.600v3.500H4.700zM8.400.700H10v9.800H8.400z" /></svg>
              Automatic
              <DropEnd $w={26}><Caret s={10} c="#555" /></DropEnd>
            </MarkSelect>
            <MarkGrid>
              <MarkButton><MarkGlyph><svg width="20" height="20"><circle cx="4.500" cy="4.500" r="4.300" fill="#86709a" /><circle cx="15.500" cy="4.500" r="4.300" fill="#f8707e" /><circle cx="4.500" cy="15.200" r="4.300" fill="#f2a37c" /><circle cx="15.500" cy="15.200" r="4.300" fill="#7fa3cc" /></svg></MarkGlyph>Color</MarkButton>
              <MarkButton><MarkGlyph><Ico w={22} h={20} sw={1.500}><path d="M5 9.500A8.200 8.200 0 1112.500 17.300" /><circle cx="6" cy="14.500" r="5" /></Ico></MarkGlyph>Size</MarkButton>
              <MarkButton><MarkGlyph><Ico w={22} h={18} sw={1.500}><path d="M.8.8h20.400v16.400H.8z" /><path d="M7.500 6V4.500h7V6M11 4.500v8.700M9.300 13.300h3.400" /></Ico></MarkGlyph>Label</MarkButton>
              <MarkButton><MarkGlyph><Ico w={24} h={17} sw={1.500}><circle cx="12" cy="3.500" r="3.400" fill="currentColor" stroke="none" /><circle cx="3.500" cy="13" r="2.700" /><circle cx="12" cy="13" r="2.700" /><circle cx="20.500" cy="13" r="2.700" /></Ico></MarkGlyph>Detail</MarkButton>
              <MarkButton><MarkGlyph><Ico w={22} h={19} sw={1.500}><path d="M.8.8h20.400v13H16V18l-4.500-4.200H.8z" /></Ico></MarkGlyph>Tooltip</MarkButton>
            </MarkGrid>
          </Card>
        </CardColumn>

        <SheetArea>
          <Shelf>
            <ShelfName><svg width="11" height="12"><path d="M0 0h2.300v2.300H0zM4.300 0h2.300v2.300H4.300zM8.600 0h2.300v2.300H8.600zM0 4h2.300v8H0zM4.300 4h2.300v8H4.300zM8.600 4h2.300v8H8.600z" fill="#666" /></svg>Columns</ShelfName>
            <Pill $color={GREEN}>SUM(Profit)</Pill>
          </Shelf>
          <Shelf>
            <ShelfName><svg width="12" height="11"><path d="M0 0h2v2H0zM3.500 0H12v2H3.500zM0 4.200h2v2H0zM3.500 4.200H12v2H3.500zM0 8.400h2v2H0zM3.500 8.400H12v2H3.500z" fill="#666" /></svg>Rows</ShelfName>
            <Pill $color={PILL}>Category</Pill>
            <Pill $color={PILL}>Expand Selected Cat..</Pill>
          </Shelf>
          <SheetRow>
            <SheetColumn>
              <View>
                <SheetTitle>
                  <Para>
                    <TitleLine $ls={0}><u>Parameters:</u> Show the next level of detail in a hierarchy for just a</TitleLine>
                    <TitleLine $ls={-0.4}>selected attribute.</TitleLine>
                  </Para>
                  <Para>
                    <TitleLine $ls={-0.03}>Hint: Create a String Parameter with the 3 different Category</TitleLine>
                    <TitleLine $ls={0.04}>Names (Furniture, Office Supplies, Technology). Create a calculated</TitleLine>
                    <TitleLine $ls={0}>field with Logical If Statement.</TitleLine>
                  </Para>
                </SheetTitle>
                <Viz>
                  <RowHeads>
                    <HeadLine $h={21} $bold><Dim $first $top={-1}>Category</Dim><Dim>Expand Sele..</Dim></HeadLine>
                    <HeadLine $h={80}>
                      <Dim $first $top={2}>Furniture</Dim>
                      <Dim>Bookcases<br />Chairs<br />Furnishings<br />Tables</Dim>
                    </HeadLine>
                    <HeadLine $h={20}><Dim $first>Office Supplies</Dim></HeadLine>
                    <HeadLine $h={20}><Dim $first>Technology</Dim></HeadLine>
                  </RowHeads>
                  <Plot />
                </Viz>
              </View>
              <Caption>
                <CaptionTitle>Caption</CaptionTitle>
                <CaptionBody>Sum of Profit for each Expand Selected Category broken down by Category.</CaptionBody>
              </Caption>
            </SheetColumn>
            <ParamCard>
              <CardTitle>Select Category</CardTitle>
              <ParamSelect>Furniture<DropEnd $w={27}><Caret s={10} c="#333" /></DropEnd></ParamSelect>
            </ParamCard>
          </SheetRow>
        </SheetArea>
      </Workspace>

      <SheetTabs>
        <SourceTab><svg width="8" height="12" fill="none" stroke="#777" strokeWidth="1.200"><rect x=".6" y=".6" width="6.800" height="10.800" rx="2.500" /><path d="M.6 3.500c1 1 5.800 1 6.800 0" /></svg>Data Source</SourceTab>
        <ActiveTab>Example 1</ActiveTab>
        <NewTab><Ico w={16} h={16} sw={1.100}><path d="M8.500 12H.7V1.200h11V8M3.500 9V7M5.500 9V5.500M8 9V4" /><path d="M7.500 12H16M11.800 8v8" strokeWidth="2" /></Ico></NewTab>
        <NewTab><Ico w={16} h={16} sw={1.100}><path d="M8.500 12H.7V1.200h10.500V8M.7 6.500h10.500M6 1.200V12" /><path d="M7.500 12H16M11.800 8v8" strokeWidth="2" /></Ico></NewTab>
        <NewTab><Ico w={16} h={16} sw={1.100}><path d="M6.500 3v9.500L.7 10.500V1zM6.500 3l5.500-2v7M6.500 12.500h1.500" /><path d="M7.500 12H16M11.800 8v8" strokeWidth="2" /></Ico></NewTab>
      </SheetTabs>
      <StatusBar>
        <StatusText $w={89}>&nbsp;6 marks</StatusText>
        <StatusText $w={165}>6 rows by 1 column</StatusText>
        <StatusText $w={170} $ls={0.4}>SUM(Profit): 286,397</StatusText>
        <StatusCell $w={189} $auto />
        <StatusCell $w={39} />
        <StatusCell $w={39} />
        <StatusCell $w={69} />
        <StatusCell $w={73} $pad={9} $gap={9}>
          <svg width="7" height="7" fill="currentColor"><path d="M0 0h1.300v7H0zM7 0v7L2 3.500z" /></svg>
          <svg width="7" height="7" fill="currentColor"><path d="M5.500 0v7l-4-3.500z" /></svg>
          <svg width="7" height="7" fill="currentColor"><path d="M1.500 0v7l4-3.500z" /></svg>
          <svg width="7" height="7" fill="currentColor"><path d="M5.700 0H7v7H5.700zM0 0v7l5-3.500z" /></svg>
        </StatusCell>
        <StatusCell $w={75} $pad={10} $gap={12}>
          <svg width="11" height="11" fill="currentColor"><path d="M0 0h3v3H0zM4 0h3v3H4zM8 0h3v3H8zM0 4h3v3H0zM4 4h3v3H4zM8 4h3v3H8zM0 8h3v3H0zM4 8h3v3H4zM8 8h3v3H8z" /></svg>
          <svg width="11" height="11" fill="currentColor"><path d="M0 0h11v7H0zM0 8h3v3H0zM4 8h3v3H4zM8 8h3v3H8z" /></svg>
          <svg width="11" height="11"><path d="M0 0h11v11H0z" fill="#666" /></svg>
        </StatusCell>
      </StatusBar>
      <Taskbar />
    </Screen>
  );
}
